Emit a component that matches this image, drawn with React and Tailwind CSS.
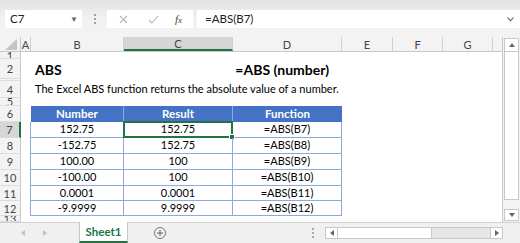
import React from "react";

const FONT = { fontFamily: "Lato, 'Liberation Sans', sans-serif" };

const rows = [
  { n: 1, h: "h-[7px]" },
  { n: 2, h: "h-[20px]" },
  { n: 3, h: "h-[2px]" },
  { n: 4, h: "h-[17px]" },
  { n: 5, h: "h-[8px]" },
  { n: 6, h: "h-[16px]" },
  { n: 7, h: "h-[16px]" },
  { n: 8, h: "h-[16px]" },
  { n: 9, h: "h-[16px]" },
  { n: 10, h: "h-[16px]" },
  { n: 11, h: "h-[15px]" },
  { n: 12, h: "h-[15px]" },
  { n: 13, h: "h-[6px]" },
];

const data = {
  7: ["152.75", "152.75", "=ABS(B7)"],
  8: ["-152.75", "152.75", "=ABS(B8)"],
  9: ["100.00", "100", "=ABS(B9)"],
  10: ["-100.00", "100", "=ABS(B10)"],
  11: ["0.0001", "0.0001", "=ABS(B11)"],
  12: ["-9.9999", "9.9999", "=ABS(B12)"],
};

function RowHeader({ n, h }) {
  const sel = n === 7;
  return (
    <div
      className={`${h} w-[21px] shrink-0 flex items-center justify-center overflow-hidden border-b border-[#dcdcdc] text-[11px] leading-none text-[#444] ${
        sel ? "bg-[#d6d6d6] border-r-2 border-r-[#217346]" : "bg-[#f3f3f3] border-r border-r-[#c8c8c8]"
      }`}
    >
      {n === 3 ? null : n}
    </div>
  );
}

function Row({ n, h }) {
  let content = null;
  if (n === 2) {
    content = (
      <>
        <div className="w-[10px] shrink-0" />
        <div className="w-[202px] shrink-0 pl-[4px] flex items-center font-bold text-[14px] text-black">ABS</div>
        <div className="w-[109px] shrink-0 flex items-center justify-end pr-[13px] font-bold text-[14px] text-black whitespace-nowrap">
          =ABS (number)
        </div>
      </>
    );
  } else if (n === 4) {
    content = (
      <>
        <div className="w-[10px] shrink-0" />
        <div className="pl-[4px] flex items-center text-[11px] text-black whitespace-nowrap">
          The Excel ABS function returns the absolute value of a number.
        </div>
      </>
    );
  } else if (n === 6) {
    content = (
      <>
        <div className="w-[10px] shrink-0" />
        {["Number", "Result", "Function"].map((t, i) => (
          <div
            key={t}
            className={`${i === 0 ? "w-[93px]" : "w-[109px]"} shrink-0 bg-[#4472c4] text-white font-bold text-[11.5px] flex items-center justify-center ${
              i < 2 ? "border-r border-[#8ea9db]" : ""
            }`}
          >
            {t}
          </div>
        ))}
      </>
    );
  } else if (data[n]) {
    const [b, c, d] = data[n];
    content = (
      <>
        <div className="w-[10px] shrink-0 border-r border-[#8ea9db]" />
        <div className="w-[93px] shrink-0 border-r border-b border-[#8ea9db] flex items-center justify-center text-[11px] text-black">
          {b}
        </div>
        <div className="w-[109px] shrink-0 border-r border-b border-[#8ea9db] relative flex items-center justify-center text-[11px] text-black">
          {c}
          {n === 7 && (
            <div className="absolute -left-[1px] -top-[1px] -right-[1px] -bottom-[1px] border-2 border-[#217346]">
              <div className="absolute -right-[4px] -bottom-[4px] w-[6px] h-[6px] bg-[#217346] border border-white" />
            </div>
          )}
        </div>
        <div className="w-[109px] shrink-0 border-r border-b border-[#8ea9db] flex items-center justify-center text-[11px] text-black">
          {d}
        </div>
      </>
    );
  }
  return (
    <div className={`${h} flex overflow-visible`}>
      <RowHeader n={n} h={h} />
      <div className="flex-1 flex bg-white">{content}</div>
    </div>
  );
}

function ColHeader() {
  const cols = [
    ["A", "w-[10px]"],
    ["B", "w-[93px]"],
    ["C", "w-[109px]"],
    ["D", "w-[109px]"],
    ["E", "w-[51px]"],
    ["F", "w-[50px]"],
    ["G", "w-[50px]"],
  ];
  return (
    <div className="h-[15px] flex bg-[#f3f3f3] border-b border-[#c8c8c8]">
      <div className="w-[21px] shrink-0 border-r border-[#c8c8c8] flex items-end justify-end pr-[3px] pb-[1px]">
        <svg width="12" height="11" viewBox="0 0 12 11">
          <polygon points="12,0 12,11 0,11" fill="#c4c4c4" />
        </svg>
      </div>
      {cols.map(([l, w]) => (
        <div
          key={l}
          className={`${w} shrink-0 flex items-center justify-center text-[11px] leading-none text-[#444] border-r border-[#d0d0d0] ${
            l === "C" ? "bg-[#d6d6d6] border-b-2 border-b-[#217346]" : ""
          }`}
        >
          {l}
        </div>
      ))}
      <div className="flex-1" />
    </div>
  );
}

export default function App() {
  return (
    <div className="w-[520px] h-[243px] overflow-hidden flex flex-col bg-[#f3f3f3] select-none" style={FONT}>
      {/* formula bar */}
      <div className="h-[37px] shrink-0 flex items-start pt-[10px] bg-gradient-to-b from-[#e2e2e2] via-[#f1f1f1] to-[#f3f3f3]">
        <div className="ml-[5px] w-[77px] h-[18px] bg-white flex items-center justify-between pl-[5px] pr-[4px] text-[11.5px] text-[#222]">
          <span>C7</span>
          <span className="text-[8px] text-[#666]">▼</span>
        </div>
        <div className="w-[25px] h-[18px] flex flex-col items-center justify-center gap-[2px]">
          <div className="w-[2px] h-[2px] bg-[#a0a0a0]" />
          <div className="w-[2px] h-[2px] bg-[#a0a0a0]" />
          <div className="w-[2px] h-[2px] bg-[#a0a0a0]" />
        </div>
        <div className="w-[86px] h-[18px] bg-white flex items-center">
          <svg className="ml-[12px]" width="9" height="9" viewBox="0 0 9 9">
            <path d="M1 1 L8 8 M8 1 L1 8" stroke="#b8b8b8" strokeWidth="1.1" />
          </svg>
          <svg className="ml-[20px]" width="11" height="9" viewBox="0 0 11 9">
            <path d="M1 5 L4 8 L10 1" stroke="#b8b8b8" strokeWidth="1.1" fill="none" />
          </svg>
          <span className="ml-[16px] text-[11px] italic text-[#444]" style={{ fontFamily: "'Liberation Serif', serif" }}>
            f<span className="text-[9px]">x</span>
          </span>
        </div>
        <div className="ml-[4px] flex-1 h-[18px] bg-white flex items-center justify-between pl-[8px] pr-[6px] text-[11.5px] text-[#222]">
          <span>=ABS(B7)</span>
          <svg width="7" height="5" viewBox="0 0 7 5">
            <path d="M0.5 0.5 L3.5 3.8 L6.5 0.5" stroke="#555" strokeWidth="1.1" fill="none" />
          </svg>
        </div>
      </div>

      {/* sheet */}
      <div className="h-[185px] shrink-0 flex">
        <div className="w-[503px] shrink-0 flex flex-col border-r border-[#c8c8c8] bg-white overflow-hidden">
          <ColHeader />
          {rows.map((r) => (
            <Row key={r.n} {...r} />
          ))}
        </div>
        <div className="flex-1 flex flex-col bg-[#f3f3f3] pl-[1px] pr-[1px] pt-[1px]">
          <div className="h-[14px] bg-white border border-[#c8c8c8] flex items-center justify-center">
            <svg width="6" height="4" viewBox="0 0 6 4">
              <polygon points="0,4 6,4 3,0" fill="#666" />
            </svg>
          </div>
          <div className="h-[148px] bg-white border-x border-[#c8c8c8] border-b" />
          <div className="flex-1" />
          <div className="h-[12px] bg-white border border-[#c8c8c8] flex items-center justify-center mb-[1px]">
            <svg width="6" height="4" viewBox="0 0 6 4">
              <polygon points="0,0 6,0 3,4" fill="#666" />
            </svg>
          </div>
        </div>
      </div>

      {/* tabs */}
      <div className="flex-1 flex items-stretch bg-[#f0f0f0] border-t border-[#d0d0d0]">
        <div className="w-[79px] shrink-0 flex items-center">
          <svg className="ml-[21px]" width="4" height="6" viewBox="0 0 4 6">
            <polygon points="4,0 4,6 0,3" fill="#c0c0c0" />
          </svg>
          <svg className="ml-[18px]" width="4" height="6" viewBox="0 0 4 6">
            <polygon points="0,0 0,6 4,3" fill="#c0c0c0" />
          </svg>
        </div>
        <div className="w-[49px] shrink-0 bg-white border-x border-[#c8c8c8] border-b-2 border-b-[#217346] flex items-center justify-center text-[11.5px] font-bold text-[#217346] -mt-[1px]">
          Sheet1
        </div>
        <div className="w-[64px] shrink-0 flex items-center justify-center">
          <div className="w-[12px] h-[12px] rounded-full border border-[#777] flex items-center justify-center">
            <svg width="8" height="8" viewBox="0 0 8 8">
              <path d="M4 1 V7 M1 4 H7" stroke="#666" strokeWidth="1" />
            </svg>
          </div>
        </div>
        <div className="flex-1" />
        <div className="w-[12px] flex flex-col items-center justify-center gap-[2px]">
          <div className="w-[2px] h-[2px] bg-[#a8a8a8]" />
          <div className="w-[2px] h-[2px] bg-[#a8a8a8]" />
          <div className="w-[2px] h-[2px] bg-[#a8a8a8]" />
        </div>
        <div className="ml-[6px] w-[178px] mr-[17px] my-[4px] flex bg-[#e6e6e6] border border-[#c8c8c8]">
          <div className="w-[12px] bg-white border-r border-[#c8c8c8] flex items-center justify-center">
            <svg width="4" height="6" viewBox="0 0 4 6">
              <polygon points="4,0 4,6 0,3" fill="#666" />
            </svg>
          </div>
          <div className="w-[94px] bg-white border-r border-[#c8c8c8]" />
          <div className="flex-1" />
          <div className="w-[12px] bg-white border-l border-[#c8c8c8] flex items-center justify-center">
            <svg width="4" height="6" viewBox="0 0 4 6">
              <polygon points="0,0 0,6 4,3" fill="#666" />
            </svg>
          </div>
        </div>
      </div>
    </div>
  );
}
